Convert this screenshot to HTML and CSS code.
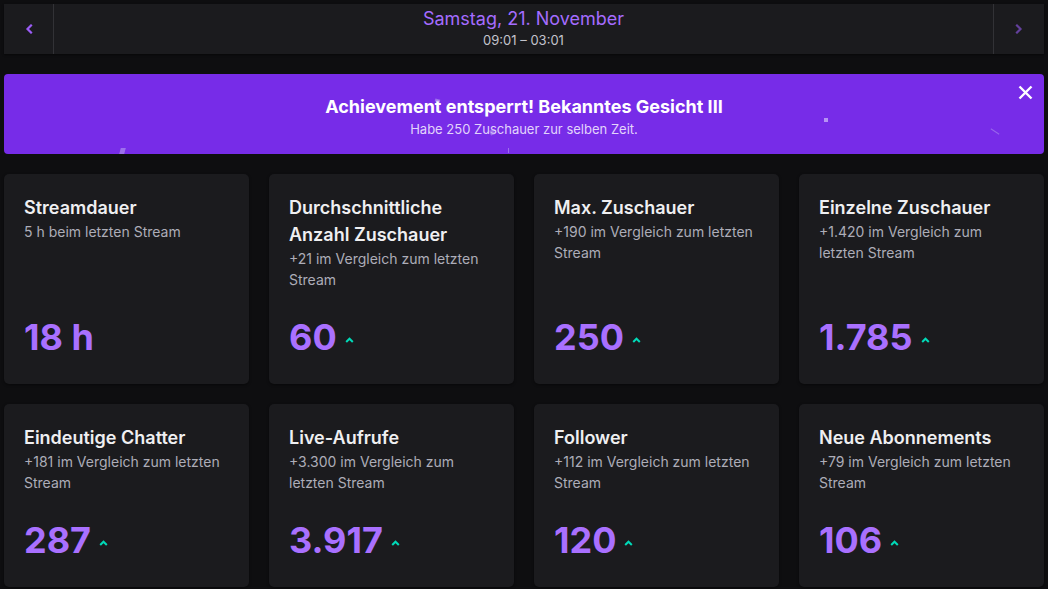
FILE: index.html
```html
<!DOCTYPE html>
<html lang="de">
<head>
<meta charset="utf-8">
<title>Stream-Zusammenfassung</title>
<link rel="stylesheet" href="styles.css">
</head>
<body>
<div class="page">
  <header class="datebar">
    <button class="nav nav-prev" aria-label="Zurück">
      <svg width="8" height="10" viewBox="0 0 8 10"><path d="M6 1.5 L2.5 5 L6 8.5" fill="none" stroke="currentColor" stroke-width="2.2" stroke-linecap="square"/></svg>
    </button>
    <div class="date">
      <div class="date-title">Samstag, 21. November</div>
      <div class="date-sub">09:01 – 03:01</div>
    </div>
    <button class="nav nav-next" aria-label="Weiter">
      <svg width="8" height="10" viewBox="0 0 8 10"><path d="M2 1.5 L5.5 5 L2 8.5" fill="none" stroke="currentColor" stroke-width="2.2" stroke-linecap="square"/></svg>
    </button>
  </header>

  <section class="banner">
    <span class="confetti c1"></span>
    <span class="confetti c2"></span>
    <span class="confetti c3"></span>
    <span class="confetti c4"></span>
    <span class="confetti c5"></span>
    <span class="confetti c6"></span>
    <div class="banner-title">Achievement entsperrt! Bekanntes Gesicht III</div>
    <div class="banner-sub">Habe 250 Zuschauer zur selben Zeit.</div>
    <button class="close" aria-label="Schließen">
      <svg width="15" height="15" viewBox="0 0 15 15"><path d="M1.5 1.5 L13.5 13.5 M13.5 1.5 L1.5 13.5" stroke="#fff" stroke-width="2.4"/></svg>
    </button>
  </section>

  <main class="grid">
    <div class="card">
      <div class="card-title">Streamdauer</div>
      <div class="card-sub">5 h beim letzten Stream</div>
      <div class="card-value"><span>18 h</span></div>
    </div>
    <div class="card">
      <div class="card-title">Durchschnittliche Anzahl Zuschauer</div>
      <div class="card-sub">+21 im Vergleich zum letzten Stream</div>
      <div class="card-value"><span>60</span><svg class="up" width="9" height="6" viewBox="0 0 9 6"><path d="M1.2 5 L4.5 1.7 L7.8 5" fill="none" stroke="currentColor" stroke-width="2"/></svg></div>
    </div>
    <div class="card">
      <div class="card-title">Max. Zuschauer</div>
      <div class="card-sub">+190 im Vergleich zum letzten Stream</div>
      <div class="card-value"><span>250</span><svg class="up" width="9" height="6" viewBox="0 0 9 6"><path d="M1.2 5 L4.5 1.7 L7.8 5" fill="none" stroke="currentColor" stroke-width="2"/></svg></div>
    </div>
    <div class="card">
      <div class="card-title">Einzelne Zuschauer</div>
      <div class="card-sub">+1.420 im Vergleich zum letzten Stream</div>
      <div class="card-value"><span>1.785</span><svg class="up" width="9" height="6" viewBox="0 0 9 6"><path d="M1.2 5 L4.5 1.7 L7.8 5" fill="none" stroke="currentColor" stroke-width="2"/></svg></div>
    </div>
    <div class="card">
      <div class="card-title">Eindeutige Chatter</div>
      <div class="card-sub">+181 im Vergleich zum letzten Stream</div>
      <div class="card-value"><span>287</span><svg class="up" width="9" height="6" viewBox="0 0 9 6"><path d="M1.2 5 L4.5 1.7 L7.8 5" fill="none" stroke="currentColor" stroke-width="2"/></svg></div>
    </div>
    <div class="card">
      <div class="card-title">Live-Aufrufe</div>
      <div class="card-sub">+3.300 im Vergleich zum letzten Stream</div>
      <div class="card-value"><span>3.917</span><svg class="up" width="9" height="6" viewBox="0 0 9 6"><path d="M1.2 5 L4.5 1.7 L7.8 5" fill="none" stroke="currentColor" stroke-width="2"/></svg></div>
    </div>
    <div class="card">
      <div class="card-title">Follower</div>
      <div class="card-sub">+112 im Vergleich zum letzten Stream</div>
      <div class="card-value"><span>120</span><svg class="up" width="9" height="6" viewBox="0 0 9 6"><path d="M1.2 5 L4.5 1.7 L7.8 5" fill="none" stroke="currentColor" stroke-width="2"/></svg></div>
    </div>
    <div class="card">
      <div class="card-title">Neue Abonnements</div>
      <div class="card-sub">+79 im Vergleich zum letzten Stream</div>
      <div class="card-value"><span>106</span><svg class="up" width="9" height="6" viewBox="0 0 9 6"><path d="M1.2 5 L4.5 1.7 L7.8 5" fill="none" stroke="currentColor" stroke-width="2"/></svg></div>
    </div>
  </main>
</div>
</body>
</html>
```

FILE: styles.css
```css
* { box-sizing: border-box; }

html, body {
  margin: 0;
  padding: 0;
  background: #0e0e10;
  font-family: Inter, "Noto Sans", "Liberation Sans", sans-serif;
  color: #efeff1;
}

.page {
  padding: 4px;
  display: flex;
  flex-direction: column;
  gap: 20px;
}

/* Date bar */
.datebar {
  height: 50px;
  background: #1b1b1e;
  display: flex;
  align-items: stretch;
  box-shadow: 0 1px 2px rgba(0,0,0,0.5);
}

.nav {
  width: 50px;
  flex: none;
  background: transparent;
  border: 0;
  padding: 0;
  margin: 0;
  display: flex;
  align-items: center;
  justify-content: center;
  cursor: pointer;
}

.nav-prev {
  color: #9b5cf6;
  border-right: 1px solid #323236;
}

.nav-next {
  width: 51px;
  color: #63409c;
  border-left: 1px solid #323236;
}

.date {
  flex: 1;
  display: flex;
  flex-direction: column;
  align-items: center;
  justify-content: center;
  padding-bottom: 1px;
}

.date-title {
  font-size: 18px;
  line-height: 21px;
  margin-bottom: 2px;
  color: #a56cff;
}

.date-sub {
  font-size: 13px;
  line-height: 18px;
  color: #c3c3cc;
}

/* Achievement banner */
.banner {
  position: relative;
  overflow: hidden;
  height: 80px;
  background: #772ce8;
  border-radius: 4px;
  padding-top: 22px;
  text-align: center;
}

.banner-title {
  font-size: 18px;
  font-weight: 700;
  line-height: 22px;
  color: #ffffff;
}

.banner-sub {
  font-size: 13px;
  line-height: 18px;
  margin-top: 2px;
  color: #e2d4fb;
}

.close {
  position: absolute;
  top: 11px;
  right: 11px;
  width: 15px;
  height: 15px;
  padding: 0;
  border: 0;
  background: transparent;
  display: block;
  cursor: pointer;
}

.close svg { display: block; }

.confetti {
  position: absolute;
  background: rgba(190, 170, 240, 0.55);
  display: block;
}
.c1 { left: 116px; top: 74px; width: 5px; height: 6px; transform: skewX(-15deg); }
.c2 { left: 431px; top: 25px; width: 5px; height: 3px; transform: rotate(15deg); }
.c3 { left: 486px; top: 56px; width: 4px; height: 5px; transform: rotate(-20deg); }
.c4 { left: 504px; top: 74px; width: 1px; height: 5px; }
.c5 { left: 820px; top: 44px; width: 4px; height: 4px; background: rgba(210, 190, 250, 0.7); }
.c6 { left: 986px; top: 57px; width: 10px; height: 1px; transform: rotate(33deg); background: rgba(190, 170, 240, 0.45); }

/* Stats grid */
.grid {
  display: grid;
  grid-template-columns: repeat(4, 1fr);
  gap: 20px;
}

.card {
  background: #1b1b1e;
  border-radius: 5px;
  padding: 20px 20px 24px;
  display: flex;
  flex-direction: column;
  box-shadow: 0 1px 3px rgba(0,0,0,0.45);
}

.card-title {
  font-size: 18px;
  font-weight: 600;
  line-height: 27px;
  color: #efeff1;
}

.card-sub {
  font-size: 14px;
  line-height: 21px;
  color: #adadb8;
}

.card-value {
  margin-top: auto;
  padding-top: 24px;
  display: flex;
  align-items: center;
  gap: 8px;
}

.card-value span {
  font-size: 36px;
  font-weight: 700;
  line-height: 46px;
  color: #a970ff;
}

.up {
  color: #00dab8;
  display: block;
  margin-top: 6px;
}
```
